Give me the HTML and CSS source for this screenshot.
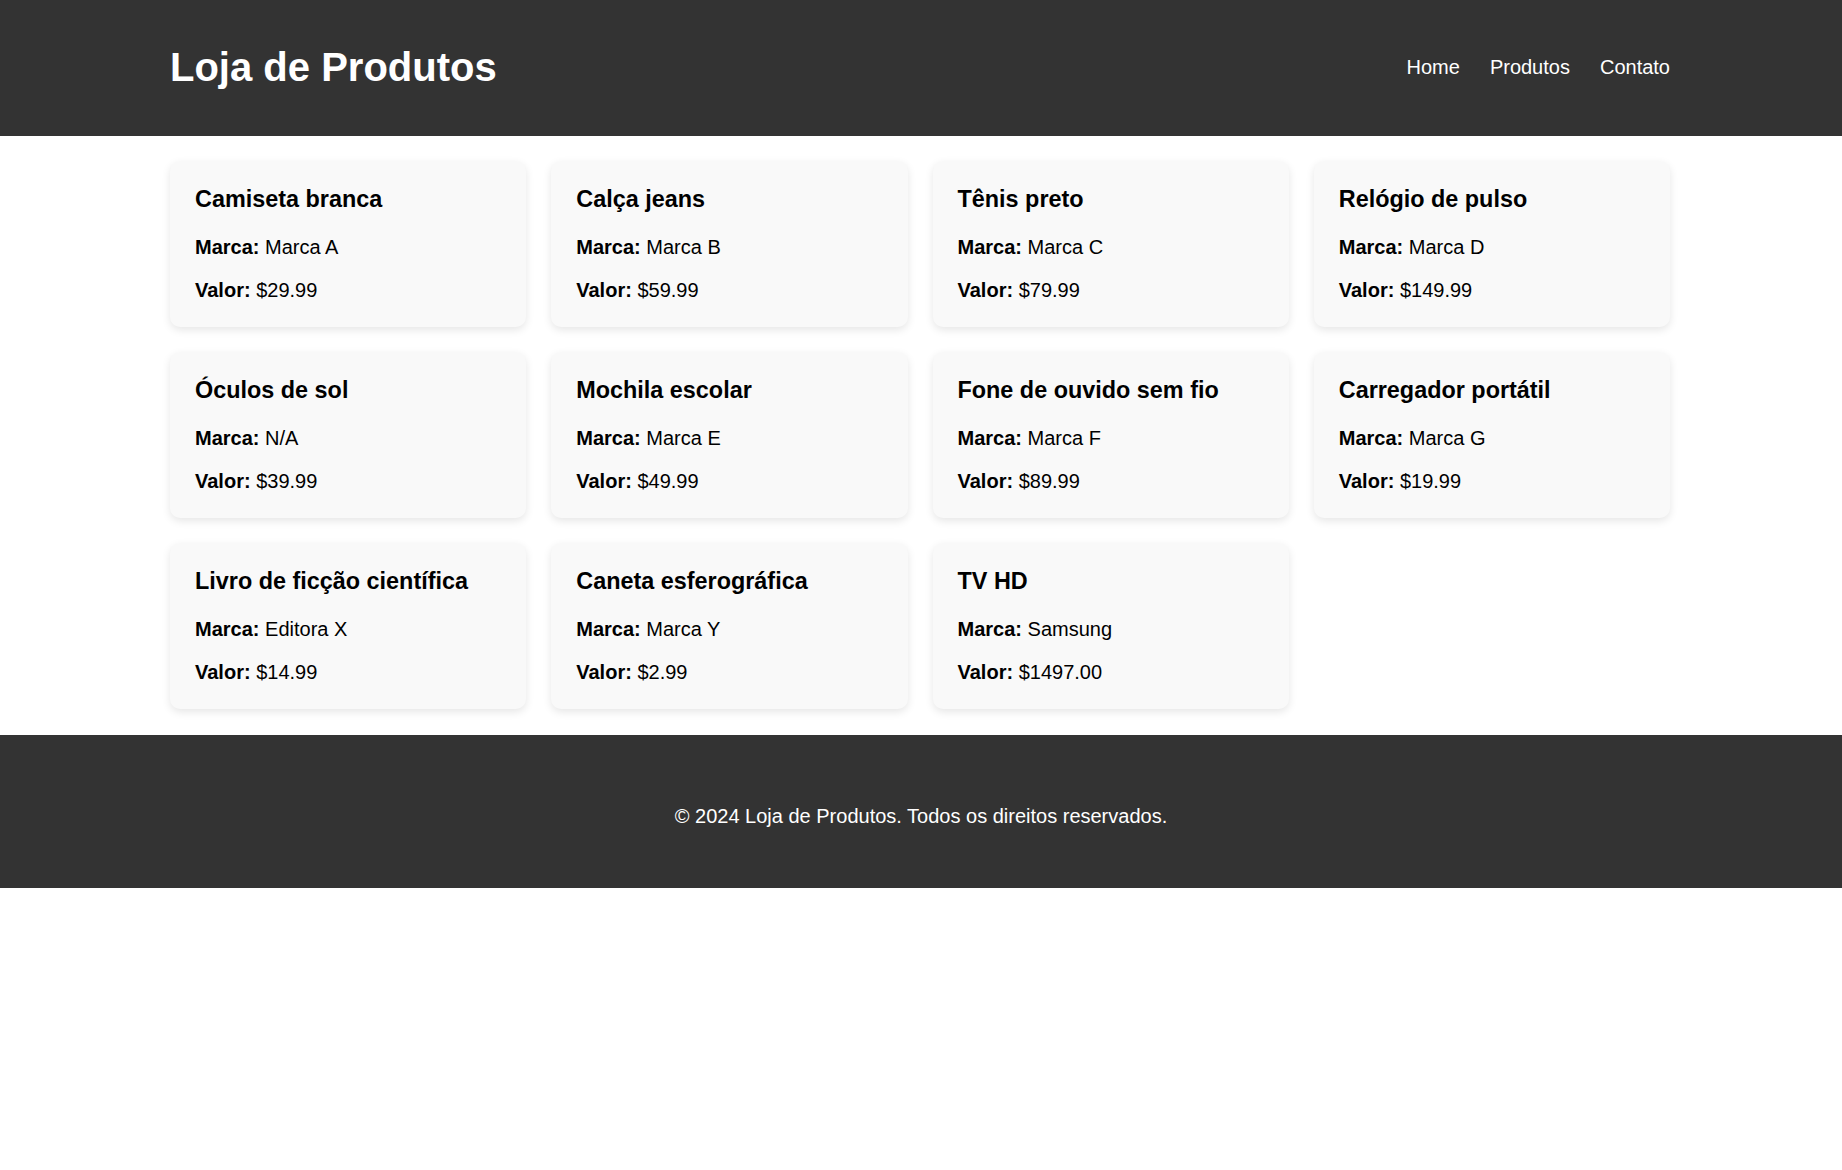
FILE: index.html
```html
<!DOCTYPE html>
<html lang="pt-BR">
<head>
<meta charset="utf-8">
<title>Loja de Produtos</title>
<link rel="stylesheet" href="styles.css">
</head>
<body>
<header class="site-header">
  <div class="container header-inner">
    <h1 class="logo">Loja de Produtos</h1>
    <nav class="nav">
      <a href="#">Home</a>
      <a href="#">Produtos</a>
      <a href="#">Contato</a>
    </nav>
  </div>
</header>
<main class="container products">
  <div class="card"><h3>Camiseta branca</h3><p><strong>Marca:</strong> Marca A</p><p><strong>Valor:</strong> $29.99</p></div>
  <div class="card"><h3>Calça jeans</h3><p><strong>Marca:</strong> Marca B</p><p><strong>Valor:</strong> $59.99</p></div>
  <div class="card"><h3>Tênis preto</h3><p><strong>Marca:</strong> Marca C</p><p><strong>Valor:</strong> $79.99</p></div>
  <div class="card"><h3>Relógio de pulso</h3><p><strong>Marca:</strong> Marca D</p><p><strong>Valor:</strong> $149.99</p></div>
  <div class="card"><h3>Óculos de sol</h3><p><strong>Marca:</strong> N/A</p><p><strong>Valor:</strong> $39.99</p></div>
  <div class="card"><h3>Mochila escolar</h3><p><strong>Marca:</strong> Marca E</p><p><strong>Valor:</strong> $49.99</p></div>
  <div class="card"><h3>Fone de ouvido sem fio</h3><p><strong>Marca:</strong> Marca F</p><p><strong>Valor:</strong> $89.99</p></div>
  <div class="card"><h3>Carregador portátil</h3><p><strong>Marca:</strong> Marca G</p><p><strong>Valor:</strong> $19.99</p></div>
  <div class="card"><h3>Livro de ficção científica</h3><p><strong>Marca:</strong> Editora X</p><p><strong>Valor:</strong> $14.99</p></div>
  <div class="card"><h3>Caneta esferográfica</h3><p><strong>Marca:</strong> Marca Y</p><p><strong>Valor:</strong> $2.99</p></div>
  <div class="card"><h3>TV HD</h3><p><strong>Marca:</strong> Samsung</p><p><strong>Valor:</strong> $1497.00</p></div>
</main>
<footer class="site-footer">
  <p>© 2024 Loja de Produtos. Todos os direitos reservados.</p>
</footer>
</body>
</html>
```

FILE: styles.css
```css
* { box-sizing: border-box; }

body {
  margin: 0;
  font-family: "Liberation Sans", Arial, sans-serif;
  font-size: 20px;
  color: #000;
  background: #fff;
}

.container {
  width: 1500px;
  margin-left: calc(50% - 751px);
}

.site-header {
  background: #333;
  color: #fff;
}

.header-inner {
  display: flex;
  justify-content: space-between;
  align-items: center;
  height: 136px;
  padding-bottom: 3px;
}

.logo {
  margin: 0;
  font-size: 40px;
  line-height: 46px;
  font-weight: bold;
}

.nav {
  display: flex;
  gap: 30px;
  padding-top: 2px;
}

.nav a {
  color: #fff;
  text-decoration: none;
  font-size: 20px;
  line-height: 23px;
}

.products {
  display: grid;
  grid-template-columns: repeat(4, 1fr);
  gap: 25px;
  padding: 25px 0 26px;
}

.card {
  background: #f9f9f9;
  border-radius: 10px;
  padding: 25px;
  height: 166px;
  box-shadow: 0 3px 8px rgba(0, 0, 0, 0.1);
}

.card h3 {
  margin: 0 0 23px;
  font-size: 23.4px;
  line-height: 27px;
  font-weight: bold;
}

.card p {
  margin: 0;
  line-height: 23px;
}

.card p + p {
  margin-top: 20px;
}

.site-footer {
  background: #333;
  color: #fff;
  text-align: center;
  padding: 70px 0 60px;
}

.site-footer p {
  margin: 0;
  line-height: 23px;
}
```
